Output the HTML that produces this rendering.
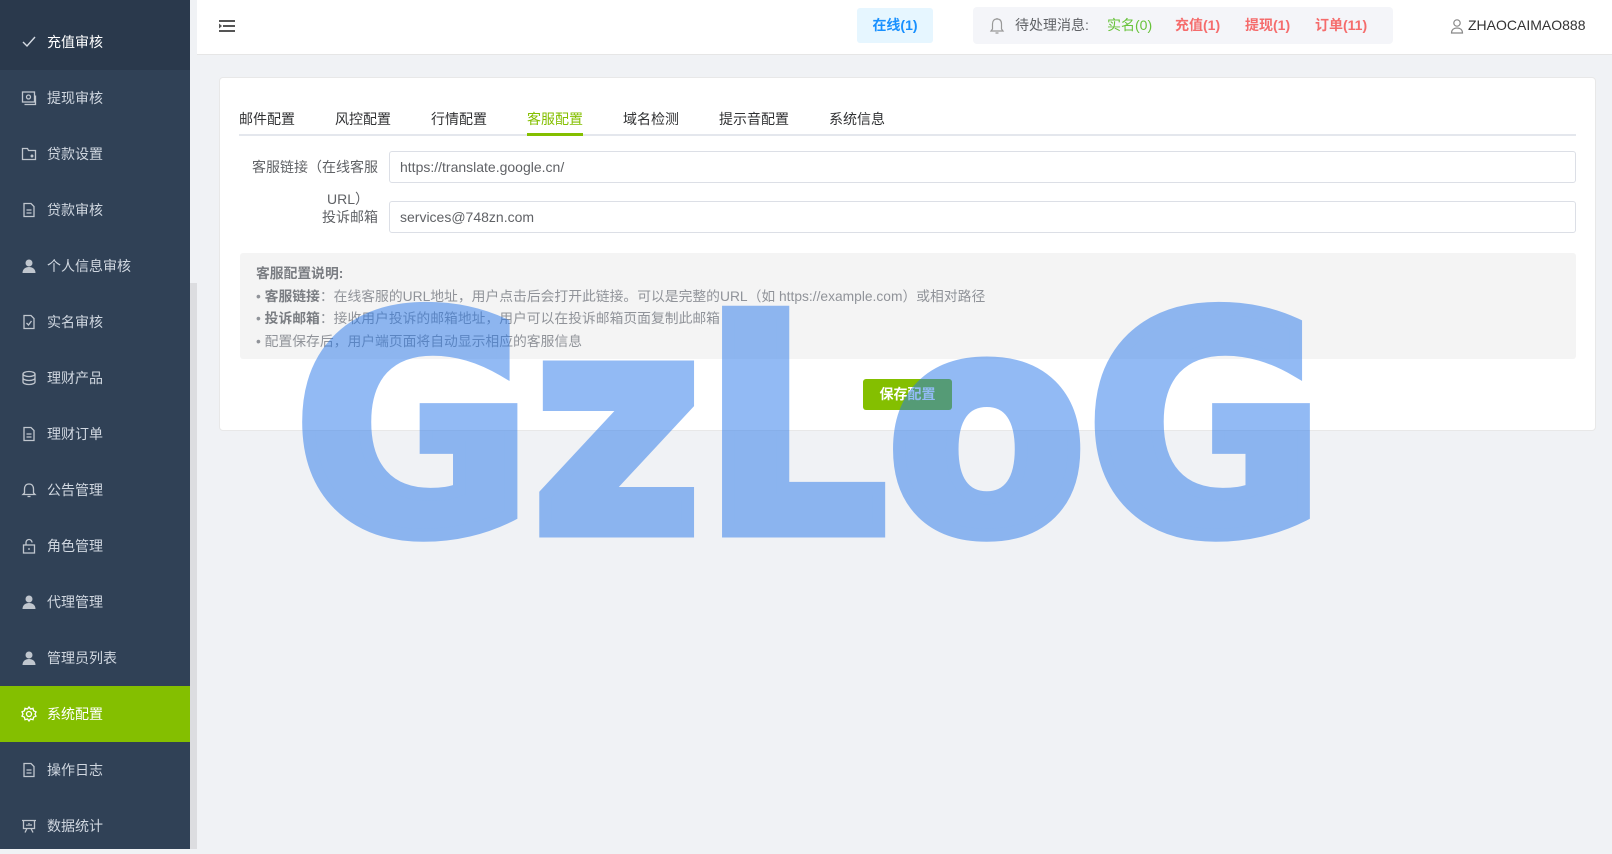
<!DOCTYPE html>
<html><head><meta charset="utf-8"><style>
*{margin:0;padding:0;box-sizing:border-box}
body{width:1612px;height:849px;overflow:hidden;background:#f0f2f5;font-family:"Liberation Sans","Noto Sans CJK SC",sans-serif;position:relative;font-size:14px;color:#333}
.side{position:absolute;left:0;top:0;width:190px;height:849px;background:#304156}
.sb{position:absolute;left:190px;top:0;width:7px;height:849px;background:#f0f2f5}
.sb2{position:absolute;left:190px;top:283px;width:7px;height:566px;background:#dcdde0}
.mi{position:absolute;left:0;width:190px;height:56px;color:#d0d7e0;font-size:14px;line-height:56px;padding-left:47px}
.mi svg{position:absolute;left:21px;top:20px}
.hdr{position:absolute;left:197px;top:0;right:0;height:55px;background:#fff;border-bottom:1px solid #e6e6e6}
.card{position:absolute;left:219px;top:77px;width:1377px;height:354px;background:#fff;border:1px solid #e8e8e8;border-radius:4px}
.tab{position:absolute;top:109px;font-size:14px;color:#303133}
.inp{position:absolute;left:389px;width:1187px;height:32px;border:1px solid #dcdfe6;border-radius:3px;background:#fff;font-size:14px;color:#606266;padding-left:10px;line-height:30px}
.lbl{position:absolute;font-size:14px;color:#606266;text-align:right;right:1234px;white-space:nowrap;line-height:18px}
.note{position:absolute;left:240px;top:253px;width:1336px;height:106px;background:#f4f4f4;border-radius:3px;padding:10px 16px;color:#909399;font-size:13.8px;line-height:22.5px;white-space:nowrap}
.note b{color:#7a7d82}
</style></head><body>
<div class="side">
<div class="mi" style="top:0;background:#2a394c;height:70px;line-height:84px;color:#fff"><svg style="top:35px" width="16" height="14" viewBox="0 0 16 14"><path d="M2 7l4 4 8-9" fill="none" stroke="#d5dbe3" stroke-width="1.4"/></svg>充值审核</div>
<div class="mi" style="top:70px"><svg width="16" height="16" viewBox="0 0 16 16" fill="none" stroke="#c0c6ce" stroke-width="1.3"><rect x="1.5" y="2" width="12" height="10"/><circle cx="7.5" cy="7" r="2"/><path d="M3.5 14.5h11v-9"/></svg>提现审核</div>
<div class="mi" style="top:126px"><svg width="16" height="16" viewBox="0 0 16 16" fill="none" stroke="#c0c6ce" stroke-width="1.3"><path d="M1.5 2.5h5l1 2h7v9h-13z"/><circle cx="11" cy="10" r=".8" fill="#c0c6ce"/></svg>贷款设置</div>
<div class="mi" style="top:182px"><svg width="16" height="16" viewBox="0 0 16 16" fill="none" stroke="#c0c6ce" stroke-width="1.3"><path d="M3 1.5h7l3 3v10H3z M5.5 8h5M5.5 11h5"/></svg>贷款审核</div>
<div class="mi" style="top:238px"><svg width="16" height="16" viewBox="0 0 16 16" fill="#c0c6ce"><circle cx="8" cy="5" r="3.5"/><path d="M1.5 15c0-4 3-6 6.5-6s6.5 2 6.5 6z"/></svg>个人信息审核</div>
<div class="mi" style="top:294px"><svg width="16" height="16" viewBox="0 0 16 16" fill="none" stroke="#c0c6ce" stroke-width="1.3"><path d="M3 1.5h7l3 3v10H3z M5.5 9l2 2 3-4"/></svg>实名审核</div>
<div class="mi" style="top:350px"><svg width="16" height="16" viewBox="0 0 16 16" fill="none" stroke="#c0c6ce" stroke-width="1.3"><ellipse cx="8" cy="4" rx="6" ry="2.5"/><path d="M2 4v8c0 1.4 2.7 2.5 6 2.5s6-1.1 6-2.5V4M2 8c0 1.4 2.7 2.5 6 2.5S14 9.4 14 8"/></svg>理财产品</div>
<div class="mi" style="top:406px"><svg width="16" height="16" viewBox="0 0 16 16" fill="none" stroke="#c0c6ce" stroke-width="1.3"><path d="M3 1.5h7l3 3v10H3z M5.5 8h5M5.5 11h5"/></svg>理财订单</div>
<div class="mi" style="top:462px"><svg width="16" height="16" viewBox="0 0 16 16" fill="none" stroke="#c0c6ce" stroke-width="1.3"><path d="M8 2c-3 0-4.5 2-4.5 5v4l-1.5 1.5h12L12.5 11V7C12.5 4 11 2 8 2zM6.5 14.5h3"/></svg>公告管理</div>
<div class="mi" style="top:518px"><svg width="16" height="16" viewBox="0 0 16 16" fill="none" stroke="#c0c6ce" stroke-width="1.3"><rect x="2.5" y="7" width="11" height="8"/><path d="M5 7V4.5a3 3 0 016 0M8 10v2"/></svg>角色管理</div>
<div class="mi" style="top:574px"><svg width="16" height="16" viewBox="0 0 16 16" fill="#c0c6ce"><circle cx="8" cy="5" r="3.5"/><path d="M1.5 15c0-4 3-6 6.5-6s6.5 2 6.5 6z"/></svg>代理管理</div>
<div class="mi" style="top:630px"><svg width="16" height="16" viewBox="0 0 16 16" fill="#c0c6ce"><circle cx="8" cy="5" r="3.5"/><path d="M1.5 15c0-4 3-6 6.5-6s6.5 2 6.5 6z"/></svg>管理员列表</div>
<div class="mi" style="top:686px;background:#84bf00;color:#fff"><svg width="16" height="16" viewBox="0 0 16 16" fill="none" stroke="#fff" stroke-width="1.3"><circle cx="8" cy="8" r="2.5"/><path d="M8 1l1.5 2 2.5-.7.6 2.5 2.4 1L14 8l1 2.2-2.4 1-.6 2.5-2.5-.7L8 15l-1.5-2-2.5.7-.6-2.5-2.4-1L2 8 1 5.8l2.4-1 .6-2.5 2.5.7z"/></svg>系统配置</div>
<div class="mi" style="top:742px"><svg width="16" height="16" viewBox="0 0 16 16" fill="none" stroke="#c0c6ce" stroke-width="1.3"><path d="M3 1.5h7l3 3v10H3z M5.5 8h5M5.5 11h5"/></svg>操作日志</div>
<div class="mi" style="top:798px"><svg width="16" height="16" viewBox="0 0 16 16" fill="none" stroke="#c0c6ce" stroke-width="1.3"><path d="M1 2.5h14M2.5 2.5v8h11v-8M6 10.5l-2 4M10 10.5l2 4M6 8V6.5M8 8V5M10 8V6"/></svg>数据统计</div>
</div>
<div class="sb"></div><div class="sb2"></div>
<div class="hdr">
<svg style="position:absolute;left:22px;top:18px" width="16" height="16" viewBox="0 0 16 16" fill="#555"><rect x="0" y="2" width="16" height="2"/><rect x="4" y="7" width="12" height="2"/><rect x="0" y="12" width="16" height="2"/><path d="M0 5.5l3 2.5-3 2.5z"/></svg>
<div style="position:absolute;left:660px;top:8px;width:76px;height:35px;background:#e6f6ff;border-radius:3px;color:#1890ff;font-weight:bold;font-size:14px;line-height:35px;text-align:center">在线(1)</div>
<div style="position:absolute;left:776px;top:7px;width:420px;height:37px;background:#f4f5f9;border-radius:4px;font-size:14px;line-height:37px;color:#606266">
<svg style="position:absolute;left:16px;top:10px" width="16" height="18" viewBox="0 0 16 18" fill="none" stroke="#999" stroke-width="1.2"><path d="M8 2c-3 0-4.5 2-4.5 5v5L2 14h12l-1.5-2V7C12.5 4 11 2 8 2zM6.5 16h3M8 1v1"/></svg>
<span style="position:absolute;left:42px">待处理消息:</span>
<span style="position:absolute;left:134px;color:#67c23a">实名(0)</span>
<span style="position:absolute;left:202px;color:#f56c6c;font-weight:bold">充值(1)</span>
<span style="position:absolute;left:272px;color:#f56c6c;font-weight:bold">提现(1)</span>
<span style="position:absolute;left:342px;color:#f56c6c;font-weight:bold">订单(11)</span>
</div>
<svg style="position:absolute;left:1253px;top:18px" width="14" height="16" viewBox="0 0 14 16" fill="none" stroke="#888" stroke-width="1.2"><circle cx="7" cy="5" r="3.2"/><path d="M1.5 15c0-3.5 2.5-5 5.5-5s5.5 1.5 5.5 5z"/></svg>
<div style="position:absolute;left:1271px;top:17px;font-size:14px;color:#333">ZHAOCAIMAO888</div>
</div>
<div class="card"></div>
<div class="tab" style="left:239px">邮件配置</div>
<div class="tab" style="left:335px">风控配置</div>
<div class="tab" style="left:431px">行情配置</div>
<div class="tab" style="left:527px;color:#84bf00">客服配置</div>
<div class="tab" style="left:623px">域名检测</div>
<div class="tab" style="left:719px">提示音配置</div>
<div class="tab" style="left:829px">系统信息</div>
<div style="position:absolute;left:239px;top:134px;width:1337px;height:2px;background:#e4e7ed"></div>
<div style="position:absolute;left:527px;top:133px;width:56px;height:3px;background:#84bf00"></div>
<div class="lbl" style="top:158px">客服链接（在线客服</div>
<div class="lbl" style="top:190px;right:1243px">URL）</div>
<div class="lbl" style="top:208px">投诉邮箱</div>
<div class="inp" style="top:151px">https://translate.google.cn/</div>
<div class="inp" style="top:201px">services@748zn.com</div>
<div class="note"><b>客服配置说明:</b><br>• <b>客服链接</b>：在线客服的URL地址，用户点击后会打开此链接。可以是完整的URL（如 https://example.com）或相对路径<br>• <b>投诉邮箱</b>：接收用户投诉的邮箱地址，用户可以在投诉邮箱页面复制此邮箱<br>• 配置保存后，用户端页面将自动显示相应的客服信息</div>
<div style="position:absolute;left:863px;top:379px;width:89px;height:31px;background:#84bf00;border-radius:3px;color:#fff;font-weight:bold;font-size:14px;line-height:31px;text-align:center">保存配置</div>
<svg style="position:absolute;left:0;top:0" width="1612" height="849"><text x="294" y="531" font-family="DejaVu Sans" font-weight="bold" font-size="300" textLength="1031" lengthAdjust="spacingAndGlyphs" fill="rgb(40,120,235)" stroke="rgb(40,120,235)" stroke-width="13" stroke-linejoin="miter" opacity="0.5">GzLoG</text></svg>
</body></html>
